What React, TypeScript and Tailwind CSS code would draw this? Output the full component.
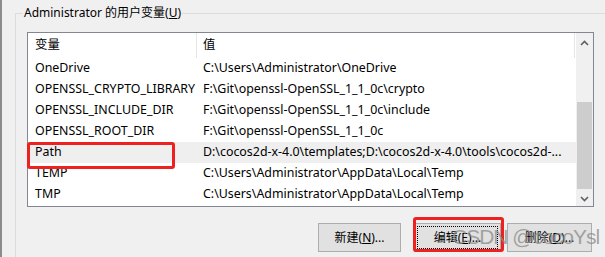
const ROWS = [
  { name: "OneDrive", value: "C:\\Users\\Administrator\\OneDrive" },
  { name: "OPENSSL_CRYPTO_LIBRARY", value: "F:\\Git\\openssl-OpenSSL_1_1_0c\\crypto" },
  { name: "OPENSSL_INCLUDE_DIR", value: "F:\\Git\\openssl-OpenSSL_1_1_0c\\include" },
  { name: "OPENSSL_ROOT_DIR", value: "F:\\Git\\openssl-OpenSSL_1_1_0c" },
  { name: "Path", value: "D:\\cocos2d-x-4.0\\templates;D:\\cocos2d-x-4.0\\tools\\cocos2d-...", hover: true },
  { name: "TEMP", value: "C:\\Users\\Administrator\\AppData\\Local\\Temp" },
  { name: "TMP", value: "C:\\Users\\Administrator\\AppData\\Local\\Temp" },
];

function Chevron({ up }: { up?: boolean }) {
  return (
    <svg width="9" height="6" viewBox="0 0 9 6" className={up ? "" : "rotate-180"}>
      <path d="M1 5 L4.5 1.5 L8 5" fill="none" stroke="#606060" strokeWidth="1.6" />
    </svg>
  );
}

function WinButton({ label, hot, width, focused }: { label: string; hot: string; width: string; focused?: boolean }) {
  return (
    <div className={`relative h-[29px] ${width} bg-[#e1e1e1] border border-[#adadad] flex items-center justify-center text-[12px] text-black`}>
      {focused && <div className="absolute inset-[2px] border border-dotted border-black" />}
      <span>
        {label}(<span className="underline">{hot}</span>)...
      </span>
    </div>
  );
}

export default function App() {
  return (
    <div
      className="relative w-[605px] h-[257px] bg-[#f0f0f0] overflow-hidden flex text-black"
      style={{ fontFamily: '"Noto Sans", "Noto Sans CJK SC", sans-serif' }}
    >
      {/* edge of the window behind */}
      <div className="w-[2px] h-full bg-[#8c8c8c]" />

      {/* group box */}
      <div className="relative ml-[13px] mt-[13px] flex-1 border-l border-t border-[#dcdcdc] pl-[11px] pt-[18px]">
        <span className="absolute -top-[9px] left-[7px] bg-[#f0f0f0] px-[1px] text-[12px] leading-[16px]">
          Administrator 的用户变量(<span className="underline">U</span>)
        </span>

        {/* list view */}
        <div className="relative w-[567px] h-[175px] border border-[#828790] bg-white flex">
          <div className="w-[548px] flex flex-col text-[12.4px]">
            <div className="h-[25px] flex items-center">
              <div className="w-[169px] h-full pl-[7px] flex items-center border-r border-[#e5e5e5]">变量</div>
              <div className="w-[378px] h-full pl-[6px] flex items-center border-r border-[#e5e5e5]">值</div>
            </div>
            {ROWS.map((r) => (
              <div key={r.name} className={`h-[21px] flex items-center ${r.hover ? "bg-[#efefef]" : ""}`}>
                <div className="w-[169px] pl-[7px] whitespace-nowrap overflow-hidden">{r.name}</div>
                <div className="flex-1 pl-[6px] whitespace-nowrap overflow-hidden">{r.value}</div>
              </div>
            ))}
          </div>

          {/* scrollbar */}
          <div className="w-[17px] bg-[#f0f0f0] flex flex-col">
            <div className="h-[17px] flex items-center justify-center pt-[3px]">
              <Chevron up />
            </div>
            <div className="flex-1 flex flex-col justify-end">
              <div className="mx-[1px] h-[87px] bg-[#cdcdcd]" />
            </div>
            <div className="h-[17px] flex items-center justify-center pt-[3px]">
              <Chevron />
            </div>
          </div>

          {/* annotation around Path */}
          <div className="absolute -left-[1px] top-[109px] w-[148px] h-[27px] border-[3px] border-[#ee2020] rounded-[3px]" />
        </div>

        {/* buttons */}
        <div className="w-[567px] mt-[16px] pr-[2px] flex justify-end">
          <div className="mr-[13px]">
            <WinButton label="新建" hot="N" width="w-[83px]" />
          </div>
          <div className="relative">
            <WinButton label="编辑" hot="E" width="w-[87px]" focused />
            <div className="absolute -left-[1px] -top-[6px] w-[91px] h-[35px] border-[3px] border-[#ee2020] rounded-[3px]" />
          </div>
          <div className="ml-[6px]">
            <WinButton label="删除" hot="D" width="w-[85px]" />
          </div>
        </div>
      </div>

      {/* watermark */}
      <div
        className="absolute left-[452px] top-[224px] text-[21px] leading-[26px] tracking-[-1px] text-[#8a8a8a]/75 whitespace-nowrap"
        style={{ fontFamily: '"Liberation Sans", sans-serif' }}
      >
        CSDN @cocoYsl
      </div>
    </div>
  );
}
